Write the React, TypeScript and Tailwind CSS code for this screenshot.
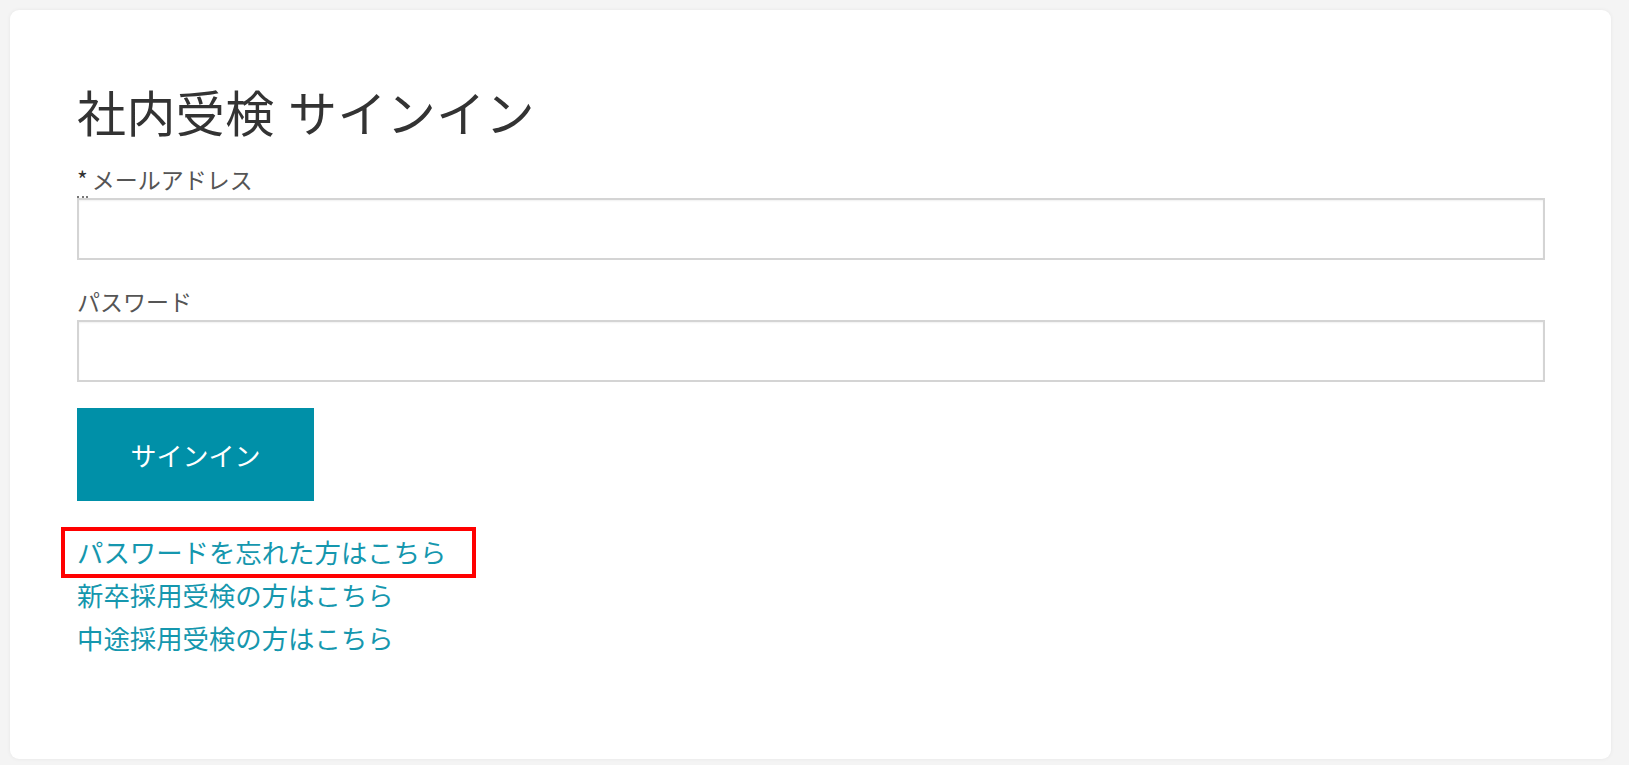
const font = { fontFamily: '"Noto Sans CJK JP", "Noto Sans", sans-serif' };

const links = ['パスワードを忘れた方はこちら', '新卒採用受検の方はこちら', '中途採用受検の方はこちら'];

function Field({ label, required, type }: { label: string; required?: boolean; type: string }) {
  return (
    <div>
      <label className="block text-[23px] leading-[30px] text-[#555555]">
        {required && (
          <abbr title="required" className="no-underline border-b-2 border-dotted border-[#777] text-[#333] mr-[4px]">
            *
          </abbr>
        )}
        {label}
      </label>
      <input
        type={type}
        className="mt-[4px] block w-full h-[62px] border-2 border-[#d4d4d4] bg-white shadow-[inset_0_1px_2px_rgba(0,0,0,0.06)] outline-none"
      />
    </div>
  );
}

export default function App() {
  return (
    <div className="min-h-screen bg-[#f4f4f4] p-[10px] pr-[18px] pb-[6px]" style={font}>
      <div className="h-[749px] bg-white rounded-[9px] shadow-[0_0_4px_rgba(0,0,0,0.06)] pt-[73px] pl-[67px] pr-[66px]">
        <h1 className="text-[49px] leading-[56px] font-normal text-[#333333] tracking-[0.4px] [word-spacing:2px]">
          社内受検 サインイン
        </h1>

        <div className="mt-[25px]">
          <Field label="メールアドレス" required type="email" />
        </div>
        <div className="mt-[26px]">
          <Field label="パスワード" type="password" />
        </div>

        <button className="mt-[26px] w-[237px] h-[93px] bg-[#0090a8] text-white text-[26px] leading-none">
          サインイン
        </button>

        <div className="mt-[29px]">
          {links.map((l, i) => (
            <div key={l} className="relative">
              <a href="#" className="text-[26.4px] leading-[43px] text-[#1597ae]">
                {l}
              </a>
              {/* annotation box over the first link */}
              {i === 0 && (
                <span className="absolute left-[-16px] top-[-3px] w-[415px] h-[51px] border-4 border-[#ff0000] pointer-events-none" />
              )}
            </div>
          ))}
        </div>
      </div>
    </div>
  );
}
